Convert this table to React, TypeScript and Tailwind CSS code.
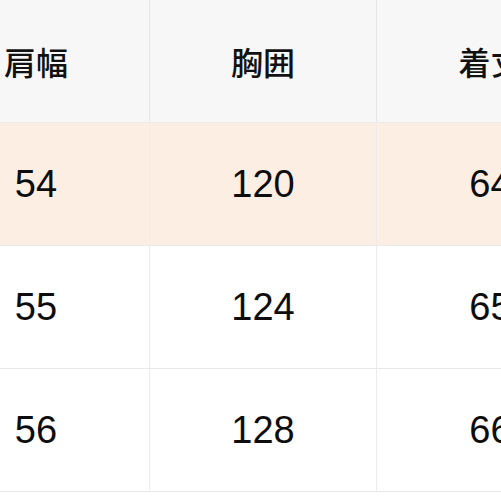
import React from "react";

const header = ["肩幅", "胸囲", "着丈"];
const rows = [
  { vals: ["54", "120", "64"], bg: "bg-[#fdeee3]" },
  { vals: ["55", "124", "65"], bg: "bg-white" },
  { vals: ["56", "128", "66"], bg: "bg-white" },
];

export default function App() {
  return (
    <div className="w-[501px] h-[501px] overflow-hidden bg-white" style={{ fontFamily: '"Liberation Sans", "Noto Sans CJK JP", sans-serif' }}>
      <div className="-ml-[77px] w-[681px]">
        <div className="grid grid-cols-[227px_227px_227px] bg-[#f7f7f7] border-b border-[#e9e9e9]">
          {header.map((h, i) => (
            <div
              key={i}
              className={`h-[122px] flex items-center justify-center text-[32px] font-medium text-[#111] ${i < 2 ? "border-r border-[#e6e6e6]" : ""}`}
              style={{ fontFamily: '"Noto Sans CJK JP", sans-serif' }}
            >
              {h}
            </div>
          ))}
        </div>
        {rows.map((r, ri) => (
          <div key={ri} className={`grid grid-cols-[227px_227px_227px] ${r.bg} border-b border-[#e9e9e9]`}>
            {r.vals.map((v, i) => (
              <div
                key={i}
                className={`h-[122px] flex items-center justify-center text-[38px] text-[#0d0d0d] ${i < 2 ? "border-r border-[#ececec]" : ""}`}
              >
                {v}
              </div>
            ))}
          </div>
        ))}
      </div>
    </div>
  );
}
